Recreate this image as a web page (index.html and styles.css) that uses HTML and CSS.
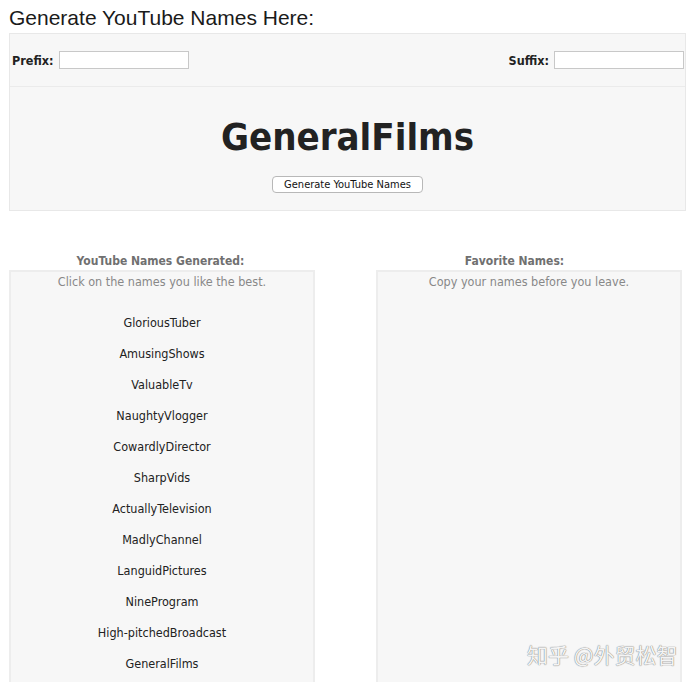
FILE: index.html
```html
<!DOCTYPE html>
<html>
<head>
<meta charset="utf-8">
<link rel="stylesheet" href="styles.css">
</head>
<body>
<div class="page">
  <h1 class="title">Generate YouTube Names Here:</h1>
  <div class="generator">
    <div class="affix-row">
      <label class="affix"><span class="affix-label">Prefix:</span><input class="affix-input" type="text"></label>
      <label class="affix"><span class="affix-label">Suffix:</span><input class="affix-input" type="text"></label>
    </div>
    <div class="result">
      <div class="result-name">GeneralFilms</div>
      <button class="gen-btn">Generate YouTube Names</button>
    </div>
  </div>
  <div class="columns">
    <div class="col">
      <div class="col-head">YouTube Names Generated:</div>
      <div class="col-box">
        <div class="col-sub">Click on the names you like the best.</div>
        <ul class="names">
          <li>GloriousTuber</li>
          <li>AmusingShows</li>
          <li>ValuableTv</li>
          <li>NaughtyVlogger</li>
          <li>CowardlyDirector</li>
          <li>SharpVids</li>
          <li>ActuallyTelevision</li>
          <li>MadlyChannel</li>
          <li>LanguidPictures</li>
          <li>NineProgram</li>
          <li>High-pitchedBroadcast</li>
          <li>GeneralFilms</li>
        </ul>
      </div>
    </div>
    <div class="col">
      <div class="col-head col-head-fav">Favorite Names:</div>
      <div class="col-box">
        <div class="col-sub">Copy your names before you leave.</div>
      </div>
    </div>
  </div>
</div>
<div class="watermark">知乎 @外贸松智</div>
</body>
</html>
```
FILE: styles.css
```css
html, body {
  margin: 0;
  padding: 0;
  background: #ffffff;
  overflow: hidden;
  height: 682px;
}
body {
  font-family: "DejaVu Sans Condensed", "DejaVu Sans", sans-serif;
  color: #222;
  position: relative;
}
.page {
  padding-left: 9px;
}
.title {
  margin: 0 0 2px 0;
  padding-top: 5px;
  font-family: "Liberation Sans", Arial, sans-serif;
  font-weight: normal;
  font-size: 21px;
  line-height: 26px;
  color: #1a1a1a;
}
.generator {
  width: 677px;
  box-sizing: border-box;
  border: 1px solid #e8e8e8;
  background: #f7f7f7;
}
.affix-row {
  height: 52px;
  display: flex;
  align-items: center;
  justify-content: space-between;
  padding: 0 1px 0 2px;
  border-bottom: 1px solid #ebebeb;
}
.affix {
  display: flex;
  align-items: center;
}
.affix-label {
  font-weight: bold;
  font-size: 12.5px;
  color: #222;
}
.affix-input {
  width: 130px;
  height: 18px;
  box-sizing: border-box;
  margin: 0 0 0 5px;
  border: 1px solid #c8c8c8;
  background: #fff;
  padding: 0;
}
.result {
  height: 123px;
  box-sizing: border-box;
  padding-top: 27px;
  display: flex;
  flex-direction: column;
  align-items: center;
}
.result-name {
  font-weight: bold;
  font-size: 38px;
  line-height: 46px;
  color: #222;
}
.gen-btn {
  margin-top: 16px;
  width: 151px;
  height: 17px;
  box-sizing: border-box;
  padding: 0;
  font-family: "DejaVu Sans Condensed", "DejaVu Sans", sans-serif;
  font-size: 11px;
  line-height: 15px;
  color: #111;
  background: #fff;
  border: 1px solid #b8b8b8;
  border-radius: 4px;
}
.columns {
  margin-top: 42px;
  display: flex;
  gap: 61px;
}
.col {
  width: 306px;
}
.col-head {
  text-align: center;
  font-weight: bold;
  font-size: 12px;
  line-height: 16px;
  color: #707070;
  margin-bottom: 1px;
  padding-right: 3px;
}
.col-head-fav {
  padding-right: 29px;
}
.col-box {
  box-sizing: border-box;
  border: 2px solid #ededed;
  background: #f7f7f7;
  height: 430px;
  padding-top: 2px;
}
.col-sub {
  text-align: center;
  font-size: 12.5px;
  line-height: 16px;
  color: #888;
}
.names {
  list-style: none;
  margin: 17px 0 0 0;
  padding: 0;
  text-align: center;
}
.names li {
  font-size: 12.5px;
  line-height: 31px;
  color: #222;
}
.watermark {
  position: absolute;
  left: 527px;
  top: 640px;
  font-family: "Noto Sans CJK SC", sans-serif;
  font-size: 21px;
  line-height: 28px;
  color: #f4f4f4;
  text-shadow: 0 0 1px #777, 0 0 1px #999;
  white-space: nowrap;
}
```
